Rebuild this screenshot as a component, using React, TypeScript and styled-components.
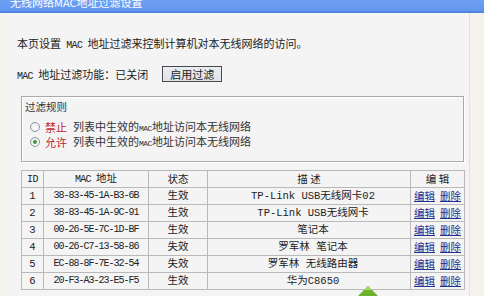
import React from 'react';
import styled, { createGlobalStyle } from 'styled-components';

const Global = createGlobalStyle`
  html, body { margin: 0; padding: 0; }
  body {
    background: #f6f3ec;
    width: 484px;
    height: 296px;
    overflow: hidden;
    font-family: "Noto Sans CJK SC", "Noto Sans", sans-serif;
    color: #222;
  }
`;

const Page = styled.div`
  position: relative;
  width: 484px;
  height: 296px;
  overflow: hidden;
  display: flex;
  flex-direction: column;
`;

const TitleBar = styled.div`
  height: 11px;
  background: linear-gradient(#6ea0f4, #6397ef);
  border-bottom: 2px solid #4f85dc;
  display: flex;
  align-items: flex-end;
  overflow: hidden;
  padding-left: 10px;
`;

const TitleText = styled.span`
  color: #fff;
  font-size: 11px;
  line-height: 17px;
  white-space: nowrap;
`;

const Main = styled.div`
  flex: 1;
  margin-left: 5px;
  width: 465px;
  box-sizing: border-box;
  background: #f4f4f4;
  border-right: 1px solid #e3e1db;
  padding: 23px 0 0 12px;
  display: flex;
  flex-direction: column;
`;

const Latin = styled.span<{ $size?: number; $track?: number }>`
  font-family: "Liberation Mono", monospace;
  font-size: ${(p) => p.$size ?? 10}px;
  letter-spacing: ${(p) => p.$track ?? -0.7}px;
`;

const Intro = styled.p`
  margin: 0;
  font-size: 11px;
  line-height: 14px;
  white-space: nowrap;
`;

const StatusRow = styled.div`
  margin-top: 13px;
  height: 16px;
  display: flex;
  align-items: center;
  font-size: 11px;
  white-space: nowrap;
`;

const ToggleButton = styled.button`
  margin-left: 14px;
  width: 60px;
  height: 16px;
  box-sizing: border-box;
  padding: 0;
  border: 1px solid #4b4b4b;
  background: linear-gradient(#e9ecf2, #dde2ea);
  font-family: "Noto Sans CJK SC", sans-serif;
  font-size: 11px;
  line-height: 14px;
  color: #222;
`;

const RuleBox = styled.div`
  margin-top: 14px;
  margin-left: 4px;
  width: 443px;
  box-sizing: border-box;
  border: 1px solid #aaaaaa;
  box-shadow: inset 1px 1px 0 #ffffff, 1px 1px 0 #ffffff;
  padding: 3px 0 12px 0;
`;

const RuleTitle = styled.div`
  padding-left: 3px;
  font-size: 10.5px;
  line-height: 14px;
  color: #333;
`;

const RadioList = styled.div`
  margin-top: 6px;
  display: flex;
  flex-direction: column;
  gap: 1px;
`;

const RadioRow = styled.label`
  height: 14px;
  display: flex;
  align-items: center;
  padding-left: 8px;
  font-size: 11px;
  line-height: 14px;
  white-space: nowrap;
  color: #333;
`;

const Radio = styled.span<{ $checked?: boolean }>`
  width: 10px;
  height: 10px;
  box-sizing: border-box;
  border-radius: 50%;
  border: 1px solid #8a95a3;
  background: radial-gradient(circle at 60% 60%, #ffffff, #e4e6e9);
  display: flex;
  align-items: center;
  justify-content: center;
  &::after {
    content: "";
    display: ${(p) => (p.$checked ? 'block' : 'none')};
    width: 4px;
    height: 4px;
    border-radius: 50%;
    background: #3c9a3c;
  }
`;

const Keyword = styled.span`
  margin-left: 5px;
  color: #c0262b;
`;

const RuleText = styled.span`
  margin-left: 6px;
`;

const Table = styled.table`
  margin-top: 8px;
  margin-left: 4px;
  width: 443px;
  border-collapse: collapse;
  table-layout: fixed;
`;

const Row = styled.tr`
  height: 17px;
`;

const Cell = styled.td<{ $mac?: boolean; $desc?: boolean }>`
  padding: ${(p) => (p.$desc ? '0 0 0 8px' : '0')};
  border: 1px solid #b9b9b9;
  text-align: center;
  white-space: nowrap;
  overflow: hidden;
  line-height: 14px;
  color: #222;
  font-family: "Liberation Mono", "Noto Sans CJK SC", monospace;
  font-size: ${(p) => (p.$mac ? '10px' : '10.5px')};
  letter-spacing: ${(p) => (p.$mac ? '-1px' : '0')};
`;

const HeadCell = styled.th`
  padding: 0;
  border: 1px solid #b9b9b9;
  text-align: center;
  white-space: nowrap;
  font-weight: normal;
  line-height: 14px;
  color: #222;
  font-family: "Noto Sans CJK SC", sans-serif;
  font-size: 10.5px;
`;

const Actions = styled.span`
  display: inline-flex;
  gap: 5px;
`;

const ActionLink = styled.a`
  font-family: "Noto Sans CJK SC", sans-serif;
  font-size: 10.5px;
  color: #22308f;
  text-decoration: underline;
  cursor: pointer;
`;

const Mark = styled.svg`
  position: absolute;
  left: 358px;
  top: 286px;
`;

const rows = [
  { id: 1, mac: '38-83-45-1A-B3-6B', state: '生效', desc: 'TP-Link USB无线网卡02' },
  { id: 2, mac: '38-83-45-1A-9C-91', state: '生效', desc: 'TP-Link USB无线网卡' },
  { id: 3, mac: '00-26-5E-7C-1D-BF', state: '生效', desc: '笔记本' },
  { id: 4, mac: '00-26-C7-13-58-86', state: '失效', desc: '罗军林 笔记本' },
  { id: 5, mac: 'EC-88-8F-7E-32-54', state: '失效', desc: '罗军林 无线路由器' },
  { id: 6, mac: '20-F3-A3-23-E5-F5', state: '生效', desc: '华为C8650' },
];

export default function App() {
  return (
    <Page>
      <Global />
      <TitleBar>
        <TitleText>无线网络MAC地址过滤设置</TitleText>
      </TitleBar>
      <Main>
        <Intro>
          本页设置<Latin> MAC </Latin>地址过滤来控制计算机对本无线网络的访问。
        </Intro>
        <StatusRow>
          <span>
            <Latin>MAC </Latin>地址过滤功能：已关闭
          </span>
          <ToggleButton>启用过滤</ToggleButton>
        </StatusRow>
        <RuleBox>
          <RuleTitle>过滤规则</RuleTitle>
          <RadioList>
            <RadioRow>
              <Radio />
              <Keyword>禁止</Keyword>
              <RuleText>
                列表中生效的<Latin $size={8} $track={-0.5}>MAC</Latin>地址访问本无线网络
              </RuleText>
            </RadioRow>
            <RadioRow>
              <Radio $checked />
              <Keyword>允许</Keyword>
              <RuleText>
                列表中生效的<Latin $size={8} $track={-0.5}>MAC</Latin>地址访问本无线网络
              </RuleText>
            </RadioRow>
          </RadioList>
        </RuleBox>
        <Table>
          <colgroup>
            <col style={{ width: 22 }} />
            <col style={{ width: 105 }} />
            <col style={{ width: 59 }} />
            <col style={{ width: 203 }} />
            <col style={{ width: 54 }} />
          </colgroup>
          <thead>
            <Row>
              <HeadCell>
                <Latin $size={10} $track={-0.5}>ID</Latin>
              </HeadCell>
              <HeadCell>
                <Latin $size={10} $track={-0.7}>MAC </Latin>地址
              </HeadCell>
              <HeadCell>状态</HeadCell>
              <HeadCell>描 述</HeadCell>
              <HeadCell>编 辑</HeadCell>
            </Row>
          </thead>
          <tbody>
            {rows.map((r) => (
              <Row key={r.id}>
                <Cell>{r.id}</Cell>
                <Cell $mac>{r.mac}</Cell>
                <Cell>{r.state}</Cell>
                <Cell $desc>{r.desc}</Cell>
                <Cell>
                  <Actions>
                    <ActionLink>编辑</ActionLink>
                    <ActionLink>删除</ActionLink>
                  </Actions>
                </Cell>
              </Row>
            ))}
          </tbody>
        </Table>
      </Main>
      <Mark width="20" height="10" viewBox="0 0 20 10">
        <polygon points="10,0 20,10 0,10" fill="#6cb22c" />
        <polygon points="10,0 14,4 6,4" fill="#a6d86a" />
      </Mark>
    </Page>
  );
}
